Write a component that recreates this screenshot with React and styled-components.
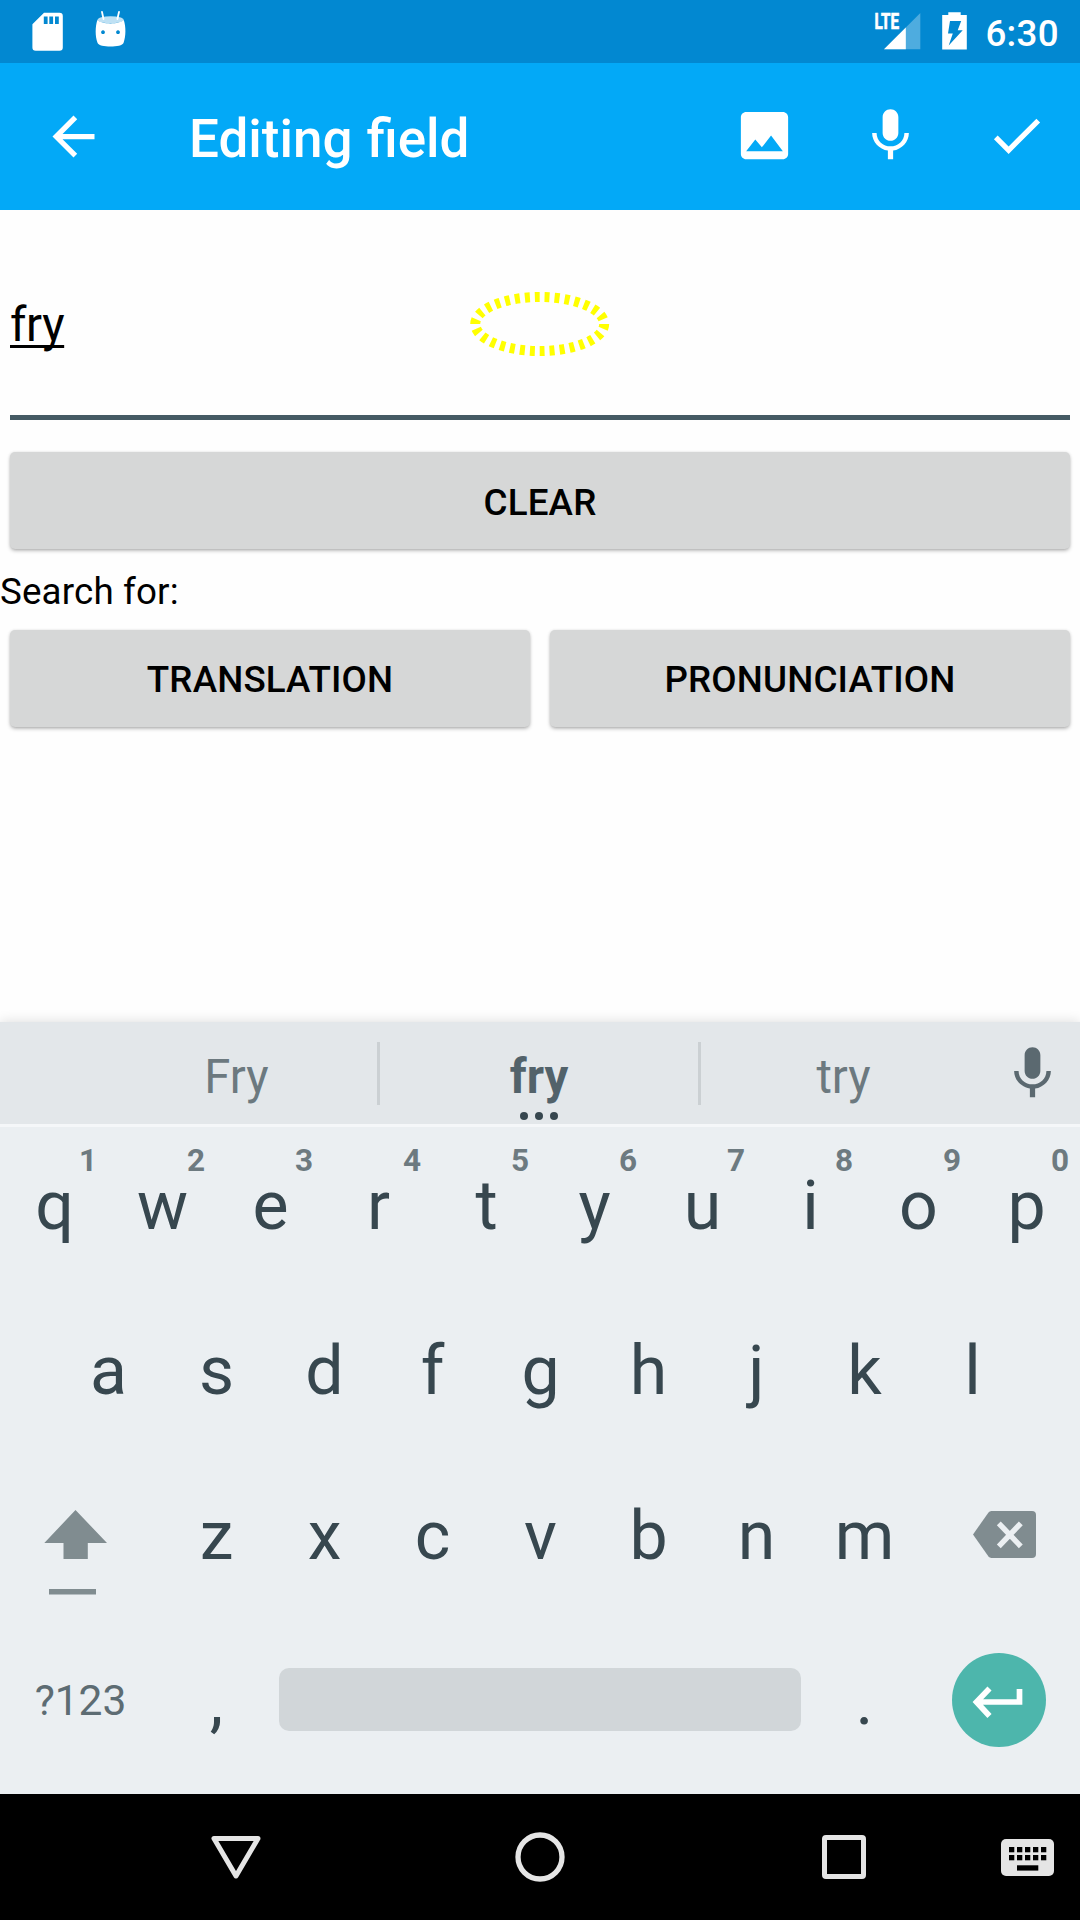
import React from "react";
import styled, { createGlobalStyle } from "styled-components";

const Global = createGlobalStyle`
  * { box-sizing: border-box; }
  body { margin: 0; background: #fefefe; }
  button { border: 0; padding: 0; background: none; font: inherit; color: inherit; }
  svg { display: block; flex: none; }
`;

const Screen = styled.div`
  width: 1080px;
  height: 1920px;
  display: flex;
  flex-direction: column;
  overflow: hidden;
  background: #fefefe;
  color: #000;
  font-family: Roboto, "Liberation Sans", sans-serif;
`;

const StatusBar = styled.header`
  height: 63px;
  flex: none;
  display: flex;
  justify-content: space-between;
  background: #0288d1;
  color: #fff;
`;

const StatusGroup = styled.div`
  display: flex;
  align-items: center;
`;

const Clock = styled.span`
  font-size: 36.75px;
  font-weight: 500;
  line-height: 40px;
  letter-spacing: 0.3px;
  padding: 4px 21px 0 17px;
`;

const AppBar = styled.div`
  height: 147px;
  flex: none;
  display: flex;
  align-items: center;
  padding: 0 32px 0 42px;
  background: #03a9f7;
  color: #fff;
`;

const Title = styled.h1`
  flex: 1;
  margin: 0;
  padding: 5px 0 0 84px;
  font-size: 53px;
  font-weight: 500;
  line-height: 60px;
  word-spacing: 1px;
  font-variant-ligatures: common-ligatures;
  text-rendering: optimizeLegibility;
`;

const Actions = styled.div`
  display: flex;
  gap: 63px;
  padding-bottom: 3px;
`;

const Editor = styled.main`
  flex: 1;
  display: flex;
  flex-direction: column;
`;

const Field = styled.div`
  position: relative;
  height: 210px;
  margin: 0 10px;
  padding-top: 87px;
  border-bottom: 5px solid #455a64;
`;

const FieldText = styled.span`
  display: block;
  font-size: 47.25px;
  line-height: 56px;
  letter-spacing: -0.35px;
  text-decoration: underline;
  text-decoration-thickness: 3px;
  text-decoration-skip-ink: none;
  text-underline-offset: 4px;
`;

const TapMark = styled.svg`
  position: absolute;
  left: 450px;
  top: 74px;
`;

const Buttons = styled.div`
  display: flex;
  gap: 20px;
  padding: 0 10px;
  margin-top: ${(p) => p.$top}px;
`;

const RaisedButton = styled.button`
  flex: 1;
  height: 97px;
  padding-top: ${(p) => p.$drop || 2}px;
  border-radius: 5px;
  background: #d6d7d7;
  box-shadow: 0 2px 4px -1px rgba(0, 0, 0, 0.38), 0 0 3px rgba(0, 0, 0, 0.08);
  font-size: 36.75px;
  font-weight: 500;
  line-height: 43px;
  letter-spacing: 0.15px;
`;

const Label = styled.p`
  margin: 21px 0 0;
  font-size: 36.75px;
  line-height: 43px;
  letter-spacing: 0.15px;
`;

const Keyboard = styled.section`
  height: 772px;
  flex: none;
  display: flex;
  flex-direction: column;
  background: #ebeff2;
  color: #37474f;
  box-shadow: 0 0 12px rgba(0, 0, 0, 0.14);
`;

const Suggestions = styled.div`
  height: 105px;
  flex: none;
  display: flex;
  align-items: flex-start;
  padding: 0 16px 0 95px;
  background: #e3e7ea;
  border-bottom: 3px solid #f5f7f9;
`;

const Suggestion = styled.button`
  width: ${(p) => p.$w}px;
  height: 102px;
  display: flex;
  flex-direction: column;
  align-items: center;
  padding: 27px 0 0 ${(p) => (p.$main ? 0 : 1)}px;
  font-size: 47.25px;
  font-weight: ${(p) => (p.$main ? 700 : 400)};
  line-height: 56px;
  color: ${(p) => (p.$main ? "#52626a" : "#6c797f")};
`;

const Dots = styled.span`
  display: flex;
  gap: 7px;
  margin-top: 7px;

  i {
    width: 8px;
    height: 8px;
    border-radius: 50%;
    background: #37474f;
  }
`;

const Divider = styled.span`
  width: 3px;
  height: 63px;
  margin-top: 20px;
  background: #cbd0d3;
`;

const MicKey = styled.button`
  margin: 20px 0 0 auto;
  color: #5b6970;
`;

const Keys = styled.div`
  padding-top: 2px;
`;

const KeyRow = styled.div`
  height: 165px;
  display: flex;
  justify-content: center;
`;

const Key = styled.button`
  position: relative;
  width: ${(p) => p.$w || 108}px;
  height: 165px;
  display: flex;
  align-items: center;
  justify-content: center;
  padding: 0 0 11px ${(p) => (p.$w ? 0 : 1)}px;
  font-size: ${(p) => (p.$small ? 42.5 : 68)}px;
  line-height: 80px;
  color: ${(p) => (p.$small ? "#5d6c73" : "inherit")};
`;

const ShiftKey = styled(Key)`
  padding: 21px 10px 0 0;
`;

const DeleteKey = styled(Key)`
  padding: 0 0 13px 10px;
`;

const SymbolsKey = styled(Key)`
  padding-right: 1px;
`;

const Hint = styled.sup`
  position: absolute;
  top: 14px;
  right: 11px;
  font-size: 31.5px;
  font-weight: 700;
  line-height: 36px;
  color: #6d7a80;
`;

const SpaceBar = styled.span`
  width: 522px;
  height: 63px;
  margin-bottom: 3px;
  border-radius: 10px;
  background: #d1d6d9;
`;

const EnterKey = styled.span`
  width: 94px;
  height: 94px;
  margin-bottom: 2px;
  border-radius: 50%;
  background: #4db6ac;
`;

const NavBar = styled.nav`
  height: 126px;
  flex: none;
  display: flex;
  align-items: center;
  padding: 0 25px 0 206px;
  background: #000;
`;

const NavButton = styled.button`
  margin-right: ${(p) => p.$gap || 0}px;
`;

const MIC =
  "M12 14c1.66 0 2.99-1.34 2.99-3L15 5c0-1.66-1.34-3-3-3S9 3.34 9 5v6c0 1.66 1.34 3 3 3zm5.3-3c0 3-2.54 5.1-5.3 5.1S6.7 14 6.7 11H5c0 3.41 2.72 6.23 6 6.72V21h2v-3.28c3.28-.48 6-3.3 6-6.72h-1.7z";
const IMAGE =
  "M21 19V5c0-1.1-.9-2-2-2H5c-1.1 0-2 .9-2 2v14c0 1.1.9 2 2 2h14c1.1 0 2-.9 2-2zM8.5 13.5l2.5 3.01L14.5 12l4.5 6H5l3.5-4.5z";
const CHECK = "M9 16.17L4.83 12l-1.42 1.41L9 19 21 7l-1.41-1.41z";
const BACK = "M20 11H7.83l5.59-5.59L12 4l-8 8 8 8 1.41-1.41L7.83 13H20v-2z";

const Icon = ({ d }) => (
  <svg width="63" height="63" viewBox="0 0 24 24" fill="currentColor">
    <path d={d} />
  </svg>
);

const StatusIcons = () => (
  <svg width="140" height="63" viewBox="0 0 140 63" fill="#fff">
    <path
      fillRule="evenodd"
      d="M44 12.7H59.500a3.300 3.300 0 0 1 3.300 3.300V47.500a3.300 3.300 0 0 1-3.300 3.300H35.700a3.300 3.300 0 0 1-3.300-3.300V24.300ZM43.800 16.600v7.500h3.800v-7.500ZM49.300 16.600v7.500h3.800v-7.500ZM55 16.600v7.500h3.800v-7.500Z"
    />
    <path d="M102 12l1.500 7M119 12l-1.600 7" stroke="#fff" strokeWidth="1.800" strokeLinecap="round" />
    <path
      fillRule="evenodd"
      d="M97.300 20C95.200 27 95 36 97.600 43 99 47.800 122 47.800 123.500 43 126 36 126 27 123.800 20 119 24.500 102 24.500 97.300 20ZM103 30.300a1.900 1.900 0 1 0 .01 0ZM118 30.300a1.900 1.900 0 1 0 .01 0Z"
    />
    <ellipse cx="110.600" cy="19.700" rx="13" ry="3.500" opacity=".75" />
  </svg>
);

const SignalIcons = () => (
  <svg width="95" height="63" viewBox="874 0 95 63" fill="#fff">
    <text
      x="875.500"
      y="29"
      fontFamily="Roboto, sans-serif"
      fontSize="22"
      fontWeight="700"
      stroke="#fff"
      strokeWidth=".7"
      textLength="24.500"
      lengthAdjust="spacingAndGlyphs"
    >
      LTE
    </text>
    <path d="M921.300 13V49.300H885Z" opacity=".3" />
    <path d="M906.800 27.500V49.300H885Z" />
    <path
      fillRule="evenodd"
      d="M949.300 12.300h12.400v2.700h6.100v34.600h-24.600V15h6.100ZM951 21 949 33.500h4.800L949.700 45.500 963.700 30.300h-5L962.200 21Z"
    />
  </svg>
);

const ShiftIcon = () => (
  <svg width="64" height="86" viewBox="44 1509 64 86" fill="#808c90">
    <path d="M75.500 1510 107 1543H87.800V1559H63.500V1543H44.300Z" />
    <path d="M49 1589H96V1594.500H49Z" />
  </svg>
);

const DeleteIcon = () => (
  <svg width="64" height="48" viewBox="972 1511 64 48">
    <path
      fill="#808c90"
      d="M991.500 1511H1032a4 4 0 0 1 4 4V1554a4 4 0 0 1-4 4H991.500a4 4 0 0 1-3.200-1.700L973 1534.500 988.300 1512.700a4 4 0 0 1 3.200-1.700Z"
    />
    <path d="M998.800 1523.300 1020.800 1546.300M1020.800 1523.300 998.800 1546.300" stroke="#ebeff2" strokeWidth="5.400" />
  </svg>
);

const EnterIcon = () => (
  <svg width="94" height="94" viewBox="952 1653 94 94" fill="none" stroke="#fff" strokeWidth="5.700">
    <path d="M1019.500 1689V1702H976.500M989.500 1688.500 976.500 1702 989.500 1716" />
  </svg>
);

const row1 = "qwertyuiop".split("");
const row2 = "asdfghjkl".split("");
const row3 = "zxcvbnm".split("");
const keyDots = [0, 1, 2, 3, 4];

export default function App() {
  return (
    <Screen>
      <Global />
      <StatusBar>
        <StatusIcons />
        <StatusGroup>
          <SignalIcons />
          <Clock>6:30</Clock>
        </StatusGroup>
      </StatusBar>
      <AppBar>
        <Icon d={BACK} />
        <Title>Editing field</Title>
        <Actions>
          <Icon d={IMAGE} />
          <Icon d={MIC} />
          <Icon d={CHECK} />
        </Actions>
      </AppBar>
      <Editor>
        <Field>
          <FieldText>fry</FieldText>
          <TapMark width="160" height="80" viewBox="460 284 160 80">
            <ellipse
              cx="539.700"
              cy="324"
              rx="64.500"
              ry="27"
              fill="none"
              stroke="#ff0"
              strokeWidth="10"
              pathLength="300"
              strokeDasharray="5 5"
            />
          </TapMark>
        </Field>
        <Buttons $top={32}>
          <RaisedButton $drop={4}>CLEAR</RaisedButton>
        </Buttons>
        <Label>Search for:</Label>
        <Buttons $top={17}>
          <RaisedButton>TRANSLATION</RaisedButton>
          <RaisedButton>PRONUNCIATION</RaisedButton>
        </Buttons>
      </Editor>
      <Keyboard>
        <Suggestions>
          <Suggestion $w={282}>Fry</Suggestion>
          <Divider />
          <Suggestion $w={318} $main>
            fry
            <Dots>
              <i />
              <i />
              <i />
            </Dots>
          </Suggestion>
          <Divider />
          <Suggestion $w={284}>try</Suggestion>
          <MicKey>
            <Icon d={MIC} />
          </MicKey>
        </Suggestions>
        <Keys>
          <KeyRow>
            {row1.map((k, i) => (
              <Key key={k}>
                {k}
                <Hint>{(i + 1) % 10}</Hint>
              </Key>
            ))}
          </KeyRow>
          <KeyRow>
            {row2.map((k) => (
              <Key key={k}>{k}</Key>
            ))}
          </KeyRow>
          <KeyRow>
            <ShiftKey $w={162}>
              <ShiftIcon />
            </ShiftKey>
            {row3.map((k) => (
              <Key key={k}>{k}</Key>
            ))}
            <DeleteKey $w={162}>
              <DeleteIcon />
            </DeleteKey>
          </KeyRow>
          <KeyRow>
            <SymbolsKey $w={162} $small>
              ?123
            </SymbolsKey>
            <Key>,</Key>
            <Key $w={540}>
              <SpaceBar />
            </Key>
            <Key>.</Key>
            <Key $w={162}>
              <EnterKey>
                <EnterIcon />
              </EnterKey>
            </Key>
          </KeyRow>
        </Keys>
      </Keyboard>
      <NavBar>
        <NavButton $gap={244}>
          <svg width="60" height="60" viewBox="206 1827 60 60" fill="none" stroke="#e5e5e5" strokeWidth="5" strokeLinejoin="round">
            <path d="M214 1838.500H258L236 1876Z" />
          </svg>
        </NavButton>
        <NavButton $gap={244}>
          <svg width="60" height="60" viewBox="510 1827 60 60" fill="none" stroke="#e5e5e5" strokeWidth="5.300">
            <circle cx="540" cy="1857" r="22" />
          </svg>
        </NavButton>
        <NavButton $gap={121}>
          <svg width="60" height="60" viewBox="814 1827 60 60" fill="none" stroke="#e5e5e5" strokeWidth="5">
            <rect x="824.500" y="1837.500" width="39" height="39" rx="1.500" />
          </svg>
        </NavButton>
        <NavButton>
          <svg width="60" height="60" viewBox="995 1827 60 60">
            <rect x="1001" y="1839" width="53" height="37" rx="5" fill="#e5e5e5" />
            {keyDots.map((n) => (
              <g key={n}>
                <rect x={1009 + n * 8} y="1847" width="5.300" height="5.300" />
                <rect x={1009 + n * 8} y="1855" width="5.300" height="5.300" />
              </g>
            ))}
            <rect x="1017" y="1865.300" width="21.300" height="5.300" />
          </svg>
        </NavButton>
      </NavBar>
    </Screen>
  );
}
